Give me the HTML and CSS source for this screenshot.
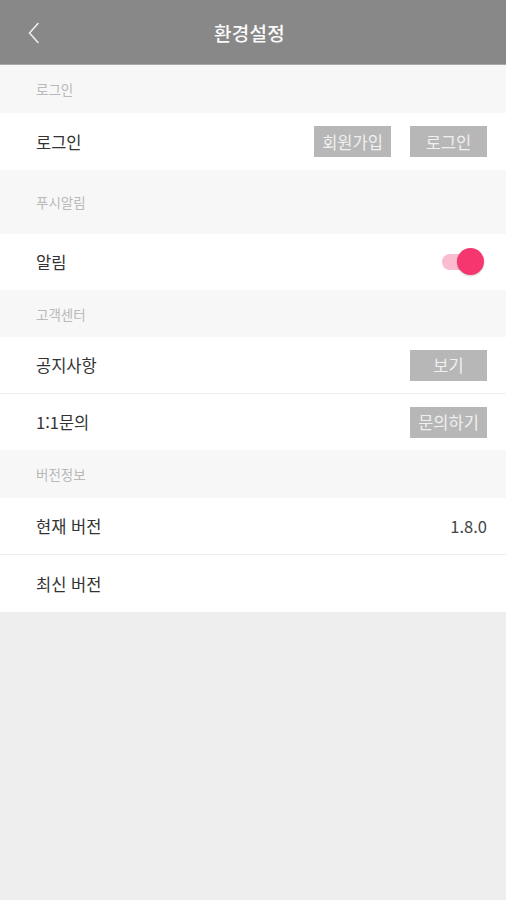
FILE: index.html
```html
<!DOCTYPE html>
<html lang="ko">
<head>
  <meta charset="UTF-8">
  <meta name="viewport" content="width=device-width, initial-scale=1.0">
  <title>환경설정</title>
  <link rel="stylesheet" href="styles.css">
</head>
<body>
  <header class="top-bar">
    <button class="back-btn" aria-label="뒤로">
      <svg width="14" height="22" viewBox="0 0 14 22">
        <path d="M11 1.5 L2.5 11 L11 20.5" fill="none" stroke="#eeeeee" stroke-width="1.6" stroke-linecap="round" stroke-linejoin="round"/>
      </svg>
    </button>
    <h1>환경설정</h1>
  </header>

  <main class="settings">
    <div class="section-title">로그인</div>
    <div class="row tall">
      <span class="label">로그인</span>
      <div class="actions">
        <button class="gray-btn">회원가입</button>
        <button class="gray-btn">로그인</button>
      </div>
    </div>

    <div class="section-title big">푸시알림</div>
    <div class="row">
      <span class="label">알림</span>
      <label class="switch">
        <span class="track"></span>
        <span class="knob"></span>
      </label>
    </div>

    <div class="section-title short">고객센터</div>
    <div class="row divided">
      <span class="label">공지사항</span>
      <button class="gray-btn">보기</button>
    </div>
    <div class="row">
      <span class="label">1:1문의</span>
      <button class="gray-btn">문의하기</button>
    </div>

    <div class="section-title">버전정보</div>
    <div class="row divided">
      <span class="label">현재 버전</span>
      <span class="value">1.8.0</span>
    </div>
    <div class="row tall">
      <span class="label">최신 버전</span>
    </div>
  </main>
</body>
</html>
```

FILE: styles.css
```css
body {
  margin: 0;
  font-family: 'Noto Sans CJK KR', 'Noto Sans', sans-serif;
  background-color: #eeeeee;
  color: #333;
}
.top-bar {
  height: 64px;
  background: #888888;
  border-bottom: 1px solid #a9a9a9;
  display: flex;
  align-items: center;
  justify-content: center;
  padding-right: 7px;
  position: relative;
}
.top-bar h1 {
  margin: 0;
  font-size: 19px;
  font-weight: 500;
  color: #fafafa;
  letter-spacing: 0.3px;
}
.back-btn {
  position: absolute;
  left: 27px;
  top: 22px;
  padding: 0;
  border: none;
  background: none;
  line-height: 0;
}
.settings {
  display: flex;
  flex-direction: column;
}
.section-title {
  height: 48px;
  background: #f7f7f7;
  color: #b9b9b9;
  font-size: 13.5px;
  padding-left: 36px;
  display: flex;
  align-items: center;
}
.section-title.short {
  height: 47px;
}
.section-title.big {
  height: 64px;
}
.row {
  height: 56px;
  background: #fff;
  display: flex;
  align-items: center;
  justify-content: space-between;
  padding: 0 19px 0 36px;
}
.row.tall {
  height: 57px;
}
.row.divided {
  border-bottom: 1px solid #eeeeee;
}
.label {
  font-size: 16.5px;
  color: #333;
}
.value {
  font-size: 16.5px;
  color: #444;
}
.actions {
  display: flex;
  gap: 19px;
}
.gray-btn {
  width: 77px;
  height: 31px;
  padding: 0;
  border: none;
  background: #b7b7b7;
  color: #f0f0f0;
  font-family: inherit;
  font-size: 16.5px;
}
.switch {
  width: 42px;
  height: 28px;
  margin-right: 3px;
  position: relative;
}
.track {
  position: absolute;
  left: 0;
  top: 6px;
  width: 34px;
  height: 16px;
  border-radius: 8px;
  background: #f9bcd0;
}
.knob {
  position: absolute;
  right: 0;
  top: 0;
  width: 27px;
  height: 27px;
  border-radius: 50%;
  background: #f5366f;
  box-shadow: 0 1px 2px rgba(0, 0, 0, 0.2);
}
```
